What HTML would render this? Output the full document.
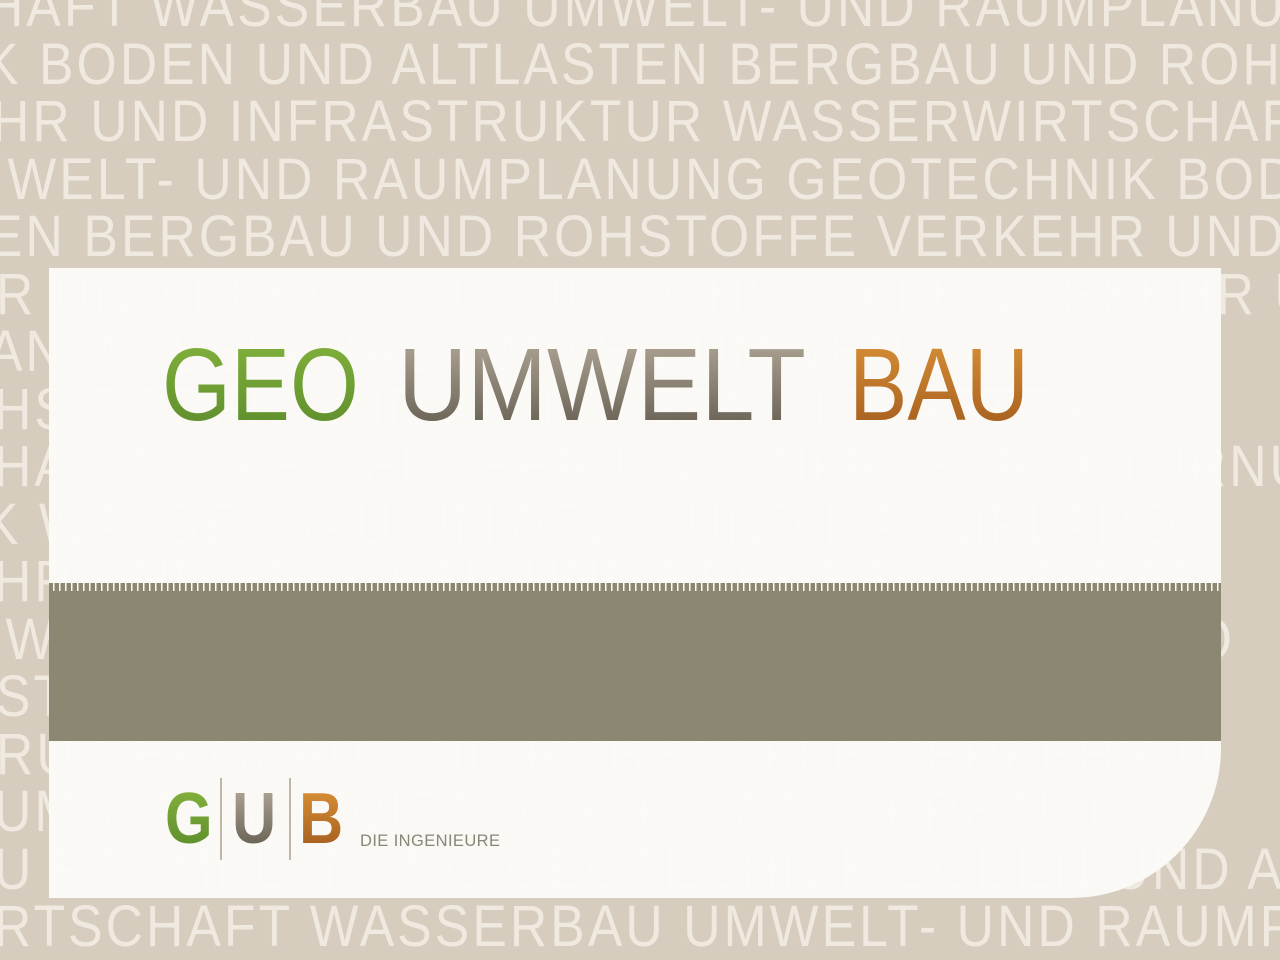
<!DOCTYPE html>
<html><head><meta charset="utf-8"><style>
html,body{margin:0;padding:0}
body{width:1280px;height:960px;position:relative;overflow:hidden;background:#d6cdbf;font-family:"Liberation Sans",sans-serif}
.bg{position:absolute;left:0;top:0;width:1280px;height:960px;overflow:hidden}
.bg div{position:absolute;white-space:nowrap;font-size:58px;letter-spacing:3.5px;color:#efe9df;line-height:58px;transform:scaleX(0.89);transform-origin:0 0}
.panel{position:absolute;left:49px;top:268px;width:1172px;height:630px;background:rgba(251,250,247,0.975);border-bottom-right-radius:150px}
.band{position:absolute;left:49px;top:583px;width:1172px;height:158px;background:#8c8772}
.teeth{position:absolute;left:49px;top:583px;width:1172px;height:8px;background:repeating-linear-gradient(90deg,transparent 0 4px,#fbfaf7 4px 5.5px,transparent 5.5px 6px)}
.g{background-image:linear-gradient(#86b43e,#5a8a2a)}
.u{background-image:linear-gradient(#b5ab9b,#5f584c)}
.b{background-image:linear-gradient(#dc9338,#a05a1c)}
.w{position:absolute;top:330px;font-size:103px;line-height:110px;white-space:nowrap;transform-origin:0 0;-webkit-background-clip:text;background-clip:text;color:transparent}
.L{position:absolute;font-weight:bold;font-size:72px;line-height:72px;top:783px;transform:scaleX(0.85);transform-origin:0 0;-webkit-background-clip:text;background-clip:text;color:transparent}
.bar{position:absolute;top:778px;width:2px;height:82px;background:#bfb6a6}
.die{position:absolute;left:360px;top:832px;font-size:16.5px;color:#8a8577;letter-spacing:0.4px}
</style></head><body>
<div class="bg">
<div style="left:-14px;top:-22px">HAFT WASSERBAU UMWELT- UND RAUMPLANUNG</div>
<div style="left:-16px;top:36px">K BODEN UND ALTLASTEN BERGBAU UND ROHSTOFFE</div>
<div style="left:-8px;top:93px">HR UND INFRASTRUKTUR WASSERWIRTSCHAFT</div>
<div style="left:-10px;top:151px">IWELT- UND RAUMPLANUNG GEOTECHNIK BODEN</div>
<div style="left:-12px;top:208px">EN BERGBAU UND ROHSTOFFE VERKEHR UND</div>
<div style="left:-4px;top:266px">R UND BERGBAU UND ROHSTOFFE VERKEHR UKLT</div>
<div style="left:-12px;top:323px">AN WASSERBAU UMWEN UMWEN B</div>
<div style="left:-6px;top:381px">HS BODEN UND ALTLASTEN ALTLASTER</div>
<div style="left:-6px;top:438px">HA STOFFE VERKEHR UND INFRASTRUKTURNU</div>
<div style="left:-16px;top:496px">K WASSERBAU UMWELT- UND RAUMPLAROI</div>
<div style="left:-6px;top:553px">HR UND BERGBAU UND BERGBAU UND RAF</div>
<div style="left:-12px;top:611px">IW GEOTECHNIK BODEN UND ALTLASTEN BO</div>
<div style="left:-4px;top:668px">ST VERKEHR UND INFRASTRUKTUR UND HR</div>
<div style="left:-4px;top:726px">RU BERGBAU UND ROHSTOFFE VERKEHR U</div>
<div style="left:-6px;top:783px">UM WASSERWIRTSCHAFT WASSERBAUTL</div>
<div style="left:-6px;top:841px">U RAUMPLANUNG GEOTECHNIK BODEN UND ALUK</div>
<div style="left:-6px;top:898px">RTSCHAFT WASSERBAU UMWELT- UND RAUMP</div>
</div>
<div class="panel"></div>
<div class="band"></div>
<div class="teeth"></div>
<div class="w g" style="left:162px;transform:scaleX(0.86)">GEO</div>
<div class="w u" style="left:398px;transform:scaleX(0.93)">UMWELT</div>
<div class="w b" style="left:849px;transform:scaleX(0.85)">BAU</div>
<div class="L g" style="left:165px">G</div>
<div class="bar" style="left:220px"></div>
<div class="L u" style="left:232px">U</div>
<div class="bar" style="left:289px"></div>
<div class="L b" style="left:299px">B</div>
<div class="die">DIE INGENIEURE</div>
</body></html>
